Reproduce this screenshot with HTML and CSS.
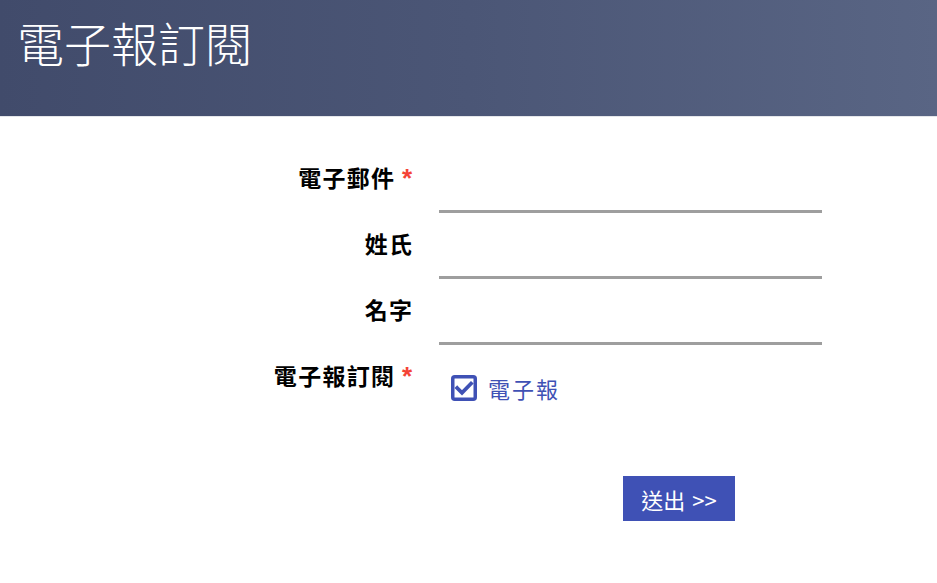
FILE: index.html
```html
<!DOCTYPE html>
<html lang="zh-Hant">
<head>
<meta charset="utf-8">
<title>電子報訂閱</title>
<link rel="stylesheet" href="styles.css">
</head>
<body>
<header class="banner">
  <h1 class="banner-title">電子報訂閱</h1>
</header>
<main class="form-wrap">
  <form class="subscribe-form">
    <div class="field">
      <label class="field-label" for="email">電子郵件 <span class="req">*</span></label>
      <input class="field-input" id="email" type="email">
    </div>
    <div class="field">
      <label class="field-label" for="lname">姓氏</label>
      <input class="field-input" id="lname" type="text">
    </div>
    <div class="field">
      <label class="field-label" for="fname">名字</label>
      <input class="field-input" id="fname" type="text">
    </div>
    <div class="field">
      <span class="field-label">電子報訂閱 <span class="req">*</span></span>
      <label class="check">
        <span class="check-box">
          <svg viewBox="0 0 26 26" width="26" height="26" aria-hidden="true">
            <rect x="1.75" y="1.75" width="22.5" height="22.5" rx="2" fill="none" stroke="#3f51b5" stroke-width="3.5"/>
            <path d="M6.2 13 L11 17.8 L20 8.6" fill="none" stroke="#3f51b5" stroke-width="3.8" stroke-linecap="square"/>
          </svg>
        </span>
        <span class="check-text">電子報</span>
      </label>
    </div>
    <div class="actions">
      <button type="button" class="submit">送出 &gt;&gt;</button>
    </div>
  </form>
</main>
</body>
</html>
```
FILE: styles.css
```css
* { box-sizing: border-box; }
body {
  margin: 0;
  background: #ffffff;
  font-family: "Noto Sans CJK TC", "Noto Sans", sans-serif;
  color: #000;
}
.banner {
  height: 117px;
  background: linear-gradient(90deg, #414b6b 0%, #4b5676 50%, #596584 100%);
  border-bottom: 1px solid #e4e6ea;
  padding: 10px 0 0 17px;
}
.banner-title {
  margin: 0;
  color: #ffffff;
  font-weight: 300;
  font-size: 47px;
  line-height: 64px;
  letter-spacing: 0;
}
.form-wrap {
  padding-top: 30px;
}
.subscribe-form {
  display: grid;
  grid-template-columns: 412px 383px;
  column-gap: 27px;
}
.field {
  display: contents;
}
.field-label {
  text-align: right;
  font-size: 23px;
  font-weight: 700;
  letter-spacing: 1.3px;
  line-height: 28px;
  padding-top: 16px;
  height: 66px;
  margin-right: -1.3px;
}
.req {
  color: #f44336;
  font-family: "Liberation Sans", sans-serif;
  font-size: 26px;
  font-weight: 700;
}
.field-input {
  border: none;
  border-bottom: 3px solid #9e9e9e;
  height: 66px;
  outline: none;
  background: transparent;
  font-size: 20px;
}
.check {
  display: flex;
  align-items: center;
  gap: 11px;
  padding: 19px 0 0 12px;
  height: 66px;
}
.check-box {
  display: block;
  width: 26px;
  height: 26px;
}
.check-box svg { display: block; }
.check-text {
  color: #3f51b5;
  font-size: 22px;
  font-weight: 400;
  letter-spacing: 2px;
}
.actions {
  grid-column: 2;
  padding-top: 65px;
  padding-left: 184px;
}
.submit {
  width: 112px;
  height: 45px;
  background: #3f51b5;
  color: #ffffff;
  border: none;
  border-radius: 0;
  font-family: "Noto Sans CJK TC", "Noto Sans", sans-serif;
  font-size: 22px;
  word-spacing: 2px;
  padding: 0;
}
```
